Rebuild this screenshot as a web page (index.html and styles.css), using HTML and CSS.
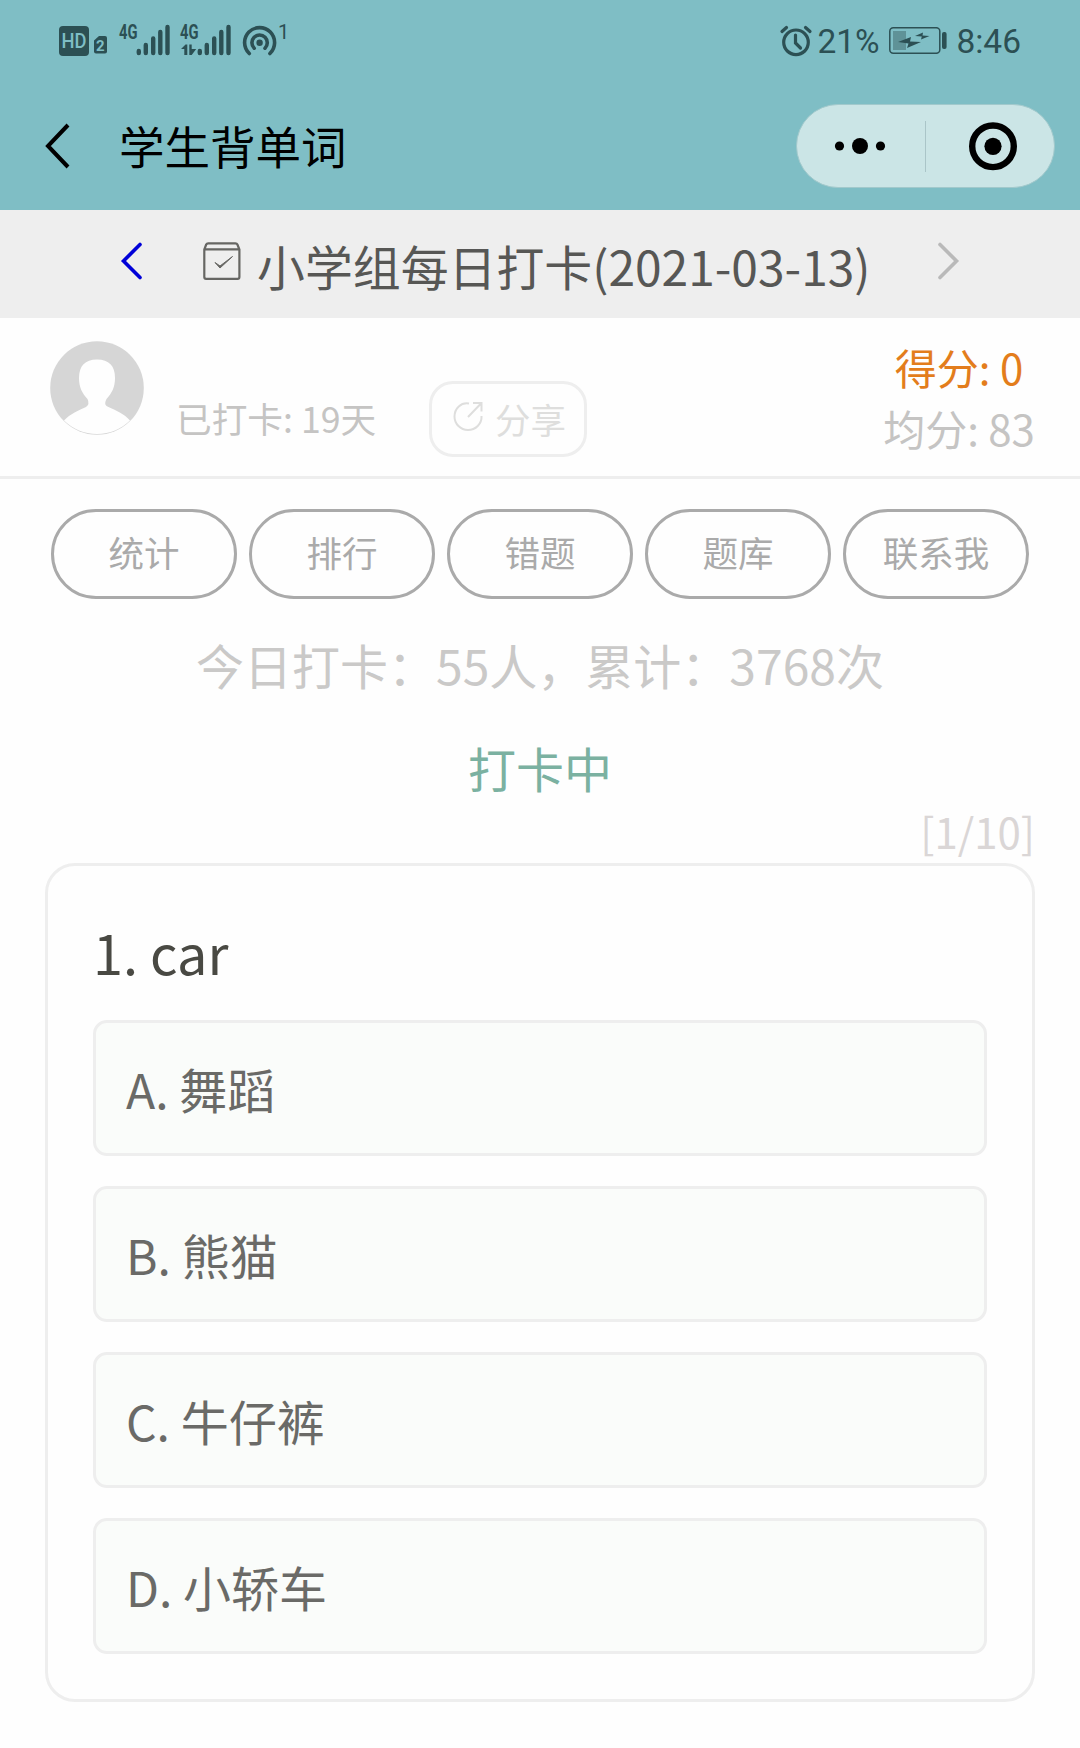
FILE: index.html
```html
<!DOCTYPE html>
<html lang="zh-CN">
<head>
  <meta charset="utf-8">
  <title>学生背单词</title>
  <link rel="stylesheet" href="styles.css">
</head>
<body>
  <header class="header">
    <div class="status-bar">
      <svg class="status-left" width="240" height="44" viewBox="55 18 240 44">
        <rect x="59" y="26" width="30" height="30" rx="4"/>
        <text class="hd" x="61.5" y="47.8" textLength="25" lengthAdjust="spacingAndGlyphs">HD</text>
        <path d="M99 36h6q2 0 2 2v13.500q0 2-2 2h-9q-2 0-2-2V40.500z"/>
        <text class="sim" x="96" y="50.500">2</text>
        <text class="net" x="119" y="38.500" textLength="18.500" lengthAdjust="spacingAndGlyphs">4G</text>
        <text class="net" x="180" y="38.500" textLength="18.500" lengthAdjust="spacingAndGlyphs">4G</text>
        <g class="bars">
          <path d="M138.800 51v2M145.800 45v8M153.200 38.500v14.500M160.300 32v21M167.500 27v26"/>
          <path d="M199.800 51v2M206.800 45v8M214.200 38.500v14.500M221.300 32v21M228.500 27v26"/>
        </g>
        <path d="M181 49l4.500-4.500h1.800V55h-3v-6zM189.300 44.500h2.400V49h4.500l-4.500 6h-2.400z"/>
        <circle cx="259.600" cy="42.700" r="3.200"/>
        <g class="waves">
          <path d="M249.300 53.500A15 15 0 1 1 269.900 53.500"/>
          <path d="M254.200 48.200A7.700 7.700 0 1 1 265 48.200"/>
        </g>
        <text class="one" x="278" y="39">1</text>
      </svg>
      <div class="status-right">
        <svg width="34" height="34" viewBox="779 23 34 34">
          <g class="alarm">
            <circle cx="796" cy="41.300" r="12.300"/>
            <path d="M795.500 34v8l5 5"/>
            <path d="M782 30.500l4.500-4M805.500 26.500l4.500 4"/>
          </g>
        </svg>
        <span class="percent">21%</span>
        <svg class="battery" width="60" height="30" viewBox="888 26 60 30">
          <rect class="shell" x="889.800" y="27.800" width="50" height="25.400" rx="3.500"/>
          <rect class="level" x="893" y="31" width="13" height="19"/>
          <path d="M898 42l13-5-1 4.500 11 .5-14 6 1.500-4.500zM915 36l8-3.500-.5 3 7 .5-8.500 3.500.8-3z"/>
          <rect x="942" y="32" width="4.600" height="17" rx="2"/>
        </svg>
        <span class="clock">8:46</span>
      </div>
    </div>
    <nav class="nav">
      <svg class="back" width="28" height="48" viewBox="0 0 28 48">
        <path d="M25 3L5 24l20 21"/>
      </svg>
      <h1>学生背单词</h1>
      <div class="capsule">
        <svg class="more" width="128" height="82" viewBox="0 0 128 82">
          <circle cx="42.500" cy="41" r="4.600"/>
          <circle cx="63" cy="41" r="8"/>
          <circle cx="83.500" cy="41" r="4.600"/>
        </svg>
        <span class="divider"></span>
        <svg class="close" width="128" height="82" viewBox="0 0 128 82">
          <circle class="ring" cx="67" cy="41.300" r="20.800"/>
          <circle cx="67" cy="41.300" r="8.600"/>
        </svg>
      </div>
    </nav>
  </header>

  <div class="date-bar">
    <svg class="prev" width="24" height="40" viewBox="0 0 24 40">
      <path d="M20 3.500L3.500 20 20 36.500"/>
    </svg>
    <svg class="calendar" width="38" height="38" viewBox="0 0 38 38">
      <path d="M1.300 7.500V35q0 1.800 1.800 1.800h31.500q1.800 0 1.800-1.800V7.500l-2-5q-.5-1.200-2-1.200H5.200q-1.500 0-2 1.200zM1.300 7.300h35.200"/>
      <path class="tick" d="M12 20.500l5 5.500L29.500 14.500 17 24z"/>
    </svg>
    <span class="date-title">小学组每日打卡(2021-03-13)</span>
    <svg class="next" width="24" height="40" viewBox="0 0 24 40">
      <path d="M3 3.500L19.500 20 3 36.500"/>
    </svg>
  </div>

  <section class="profile">
    <svg class="avatar" width="94" height="94" viewBox="0 0 94 94">
      <circle class="ground" cx="47" cy="47" r="46.800"/>
      <path class="person" d="M14 79.500C20 73 29 69 36 66q4-3 1.500-8C32 52 29 46 29 37 29 25 35 18.500 47 18.500S65 25 65 37c0 9-3 15-8.500 21-2.500 5-1 7 2 8 7 3 16 7 21.500 13.500C71 88 60 93 47 93S23 88 14 79.500z"/>
    </svg>
    <span class="days">已打卡: 19天</span>
    <button class="share">
      <svg width="30" height="30" viewBox="0 0 30 30">
        <path d="M16 2.500C8 1 1.500 7.500 1.500 15.500c0 7.500 6 13.500 13.500 13.500s14-6 13.500-14M15 16L28 2.500M20 2h8.500v8.500"/>
      </svg>
      <span>分享</span>
    </button>
    <div class="scores">
      <p class="mine">得分: 0</p>
      <p class="average">均分: 83</p>
    </div>
  </section>

  <div class="menu">
    <button>统计</button>
    <button>排行</button>
    <button>错题</button>
    <button>题库</button>
    <button>联系我</button>
  </div>

  <p class="summary">今日打卡：55人，累计：3768次</p>
  <p class="state">打卡中</p>
  <p class="progress">[1/10]</p>

  <main class="card">
    <h2>1. car</h2>
    <ul class="options">
      <li>A. 舞蹈</li>
      <li>B. 熊猫</li>
      <li>C. 牛仔裤</li>
      <li>D. 小轿车</li>
    </ul>
  </main>
</body>
</html>
```
FILE: styles.css
```css
* {
  box-sizing: border-box;
}
body {
  margin: 0;
  height: 1748px;
  overflow: hidden;
  background: #fefefe;
  font-family: "Noto Sans CJK SC", sans-serif;
  color: #6a6a67;
}
h1, h2, p, ul {
  margin: 0;
  padding: 0;
  font-weight: normal;
}
svg {
  display: block;
  flex: none;
}
button {
  font-family: inherit;
  background: none;
  padding: 0;
}

/* status bar + title */
.header {
  height: 210px;
  background: #7fbec5;
}
.status-bar {
  display: flex;
  justify-content: space-between;
  height: 82px;
  padding: 18px 59px 0 55px;
  fill: #2c5054;
  color: #2c5054;
  font-family: Roboto, sans-serif;
}
.status-left text {
  font-family: Roboto, sans-serif;
}
.status-left .hd {
  font-size: 20px;
  font-weight: 500;
  fill: #7fbec5;
}
.status-left .sim {
  font-size: 15px;
  font-weight: 700;
  fill: #7fbec5;
}
.net {
  font-size: 20px;
  font-weight: 700;
}
.one {
  font-size: 20px;
}
.bars {
  fill: none;
  stroke: #2c5054;
  stroke-width: 4.4;
  stroke-linecap: round;
}
.waves {
  fill: none;
  stroke: #2c5054;
  stroke-width: 3.6;
  stroke-linecap: round;
}
.status-right {
  display: flex;
  align-items: center;
  height: 46px;
  font-size: 33.5px;
  line-height: 46px;
}
.status-right span {
  padding-top: 2px;
}
.alarm {
  fill: none;
  stroke: #2c5054;
  stroke-width: 3.2;
  stroke-linecap: round;
}
.percent {
  width: 71px;
  margin-left: 4px;
}
.battery {
  margin-right: 8px;
}
.shell {
  fill: none;
  stroke: #2c5054;
  stroke-width: 1.5;
}
.level {
  fill: #5f9297;
}
.nav {
  display: flex;
  align-items: center;
  height: 128px;
  padding: 0 25px 0 43px;
}
.back {
  fill: none;
  stroke: #000;
  stroke-width: 4;
}
.nav h1 {
  flex: 1;
  margin-left: 48px;
  padding-bottom: 2px;
  color: #000;
  font-size: 45.5px;
  line-height: 64px;
}
.capsule {
  display: flex;
  align-items: center;
  width: 259px;
  height: 84px;
  border: 1px solid #a2c9cc;
  border-radius: 42px;
  background: #cbe5e6;
}
.divider {
  width: 1px;
  height: 51px;
  background: #aac5c8;
}
.ring {
  fill: none;
  stroke: #000;
  stroke-width: 6.4;
}

/* date switcher */
.date-bar {
  display: flex;
  height: 108px;
  padding: 31px 119px 0 120px;
  background: #eee;
  color: #575755;
}
.prev, .next {
  fill: none;
  stroke-width: 3.6;
  stroke-linecap: round;
}
.prev { stroke: #0000d8; }
.next {
  margin-left: auto;
  stroke: #b9b9b9;
}
.calendar {
  margin: 1px 0 0 59px;
  fill: none;
  stroke: #666663;
  stroke-width: 2.2;
}
.tick {
  fill: #666663;
  stroke-width: 1;
}
.date-title {
  margin: -11px 0 0 16px;
  font-size: 47.9px;
  line-height: 70px;
  white-space: nowrap;
}

/* user row */
.profile {
  display: flex;
  height: 161px;
  padding: 23px 45px 0 50px;
  border-bottom: 3px solid #eee;
  color: #c5c4c3;
}
.ground {
  fill: #d6d6d6;
}
.person {
  fill: #fefefe;
}
.days {
  width: 204px;
  margin: 51px 0 0 32px;
  font-size: 35.7px;
  line-height: 52px;
  white-space: nowrap;
}
.share {
  display: flex;
  gap: 12px;
  width: 158px;
  height: 76px;
  margin: 40px 0 0 49px;
  padding: 17px 0 0 21px;
  border: 3px solid #eee;
  border-radius: 24px;
  color: #dededd;
  font-size: 35.5px;
  line-height: 36px;
}
.share svg {
  fill: none;
  stroke: #dededd;
  stroke-width: 2;
}
.scores {
  width: 152px;
  margin: -5px 0 0 auto;
  font-size: 42px;
  line-height: 61px;
  text-align: center;
  white-space: nowrap;
}
.mine {
  color: #e37d1c;
}

/* pill buttons */
.menu {
  display: flex;
  justify-content: space-between;
  padding: 30px 51px 0;
}
.menu button {
  width: 186px;
  height: 90px;
  padding-bottom: 5px;
  border: 3px solid #aaa;
  border-radius: 45px;
  color: #aaa;
  font-size: 35.5px;
}

.summary {
  margin-top: 30px;
  color: #cac9c8;
  font-size: 48px;
  line-height: 70px;
  text-align: center;
}
.state {
  margin-top: 33px;
  color: #7bb1a1;
  font-size: 48px;
  line-height: 70px;
  text-align: center;
}
.progress {
  margin-bottom: 3px;
  padding-right: 45px;
  color: #dad6d6;
  font-size: 42px;
  line-height: 58px;
  text-align: right;
}

/* question */
.card {
  height: 839px;
  margin: 0 45px;
  padding: 46px 45px 0;
  border: 3px solid #eee;
  border-radius: 30px;
}
.card h2 {
  color: #494943;
  font-size: 54px;
  line-height: 80px;
}
.options {
  display: flex;
  flex-direction: column;
  gap: 30px;
  margin-top: 28px;
  list-style: none;
}
.options li {
  height: 136px;
  padding: 0 30px;
  border: 3px solid #eee;
  border-radius: 14px;
  background: #fafcfa;
  font-size: 48px;
  line-height: 131px;
}
```
